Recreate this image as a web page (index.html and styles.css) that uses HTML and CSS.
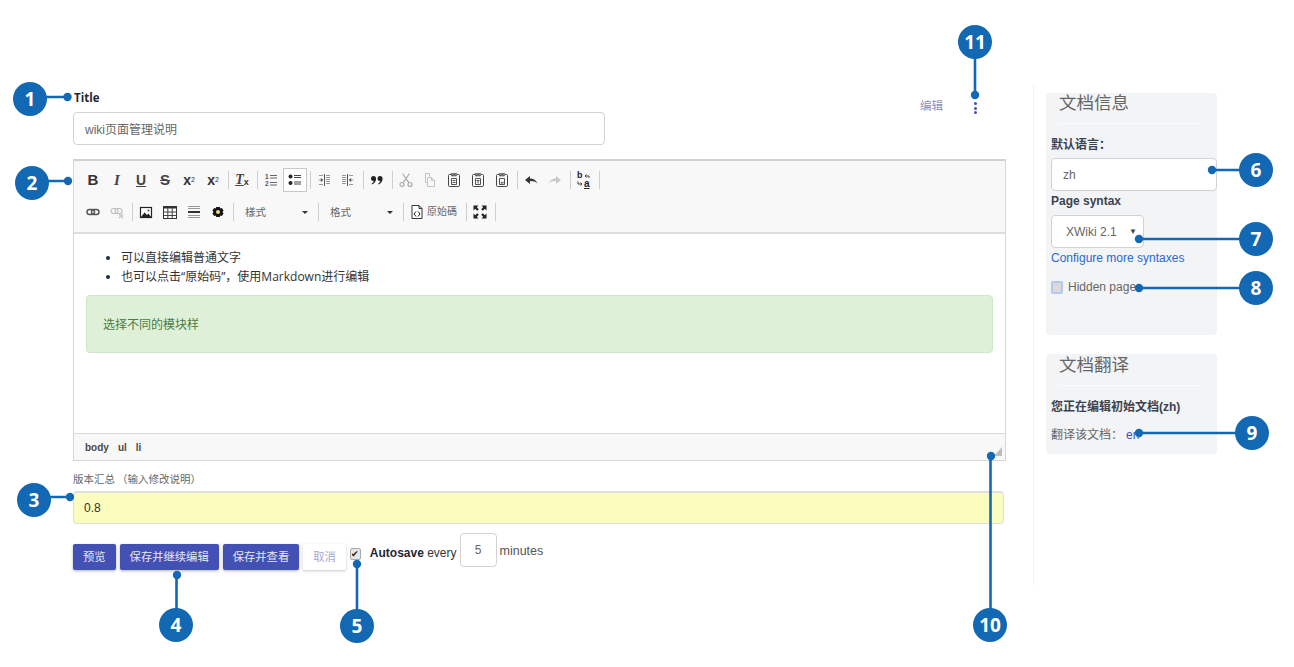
FILE: index.html
```html
<!DOCTYPE html>
<html lang="zh">
<head>
<meta charset="utf-8">
<title>编辑</title>
<link rel="stylesheet" href="styles.css">
</head>
<body>
<div class="page">
  <main class="main">
    <div class="head">
      <div class="title-field">
        <label class="title-label">Title</label>
        <div class="input title-input">wiki页面管理说明</div>
      </div>
      <div class="actions">
        <span class="edit-link">编辑</span>
        <span class="dots"><i></i><i></i><i></i></span>
      </div>
    </div>

    <section class="editor">
      <div class="toolbar">
        <div class="row">
          <span class="btn t-b">B</span>
          <span class="btn t-i">I</span>
          <span class="btn t-u">U</span>
          <span class="btn t-s">S</span>
          <span class="btn t-x">x<sub>2</sub></span>
          <span class="btn t-x">x<sup>2</sup></span>
          <span class="sep"></span>
          <span class="btn t-clear"><span>T</span><em>x</em></span>
          <span class="sep"></span>
          <span class="btn"><svg width="16" height="16" viewBox="0 0 16 16"><text x="2" y="7" class="mini">1</text><text x="2" y="14" class="mini">2</text><path d="M7 3.500h7M7 6h7M7 10.500h7M7 13h7" stroke="#666" fill="none"/></svg></span>
          <span class="btn active"><svg width="16" height="16" viewBox="0 0 16 16"><circle cx="3.500" cy="4.500" r="2" fill="#222"/><circle cx="3.500" cy="11" r="2" fill="#222"/><path d="M7 3.500h7M7 5.500h7M7 10h7M7 12h7" stroke="#444" fill="none"/></svg></span>
          <span class="sep"></span>
          <span class="btn"><svg width="16" height="16" viewBox="0 0 16 16"><path d="M8.500 2v12" stroke="#555" fill="none"/><path d="M10 3.500h4M10 5.500h4M10 7.500h4M10 9.500h4M10 11.500h4M3 3.500h4M3 12.500h4" stroke="#999" fill="none"/><path d="M2.500 8h2.500M7 8 5 6.500v3z" fill="#555" stroke="#555" stroke-width=".5"/></svg></span>
          <span class="btn"><svg width="16" height="16" viewBox="0 0 16 16"><path d="M7.500 2v12" stroke="#555" fill="none"/><path d="M2 3.500h4M2 5.500h4M2 7.500h4M2 9.500h4M2 11.500h4M9 3.500h4M9 12.500h4" stroke="#999" fill="none"/><path d="M13.500 8H11M9 8l2-1.500v3z" fill="#555" stroke="#555" stroke-width=".5"/></svg></span>
          <span class="sep"></span>
          <span class="btn"><svg width="16" height="16" viewBox="0 0 16 16"><circle cx="4.500" cy="6.500" r="2.500" fill="#222"/><circle cx="11" cy="6.500" r="2.500" fill="#222"/><path d="M7 6.500C7 9.500 5.500 11.500 3 12.500l-.4-.8C4 10.800 4.600 9.800 4.800 8.500zM13.500 6.500c0 3-1.500 5-4 6l-.4-.8c1.400-.9 2-1.900 2.200-3.200z" fill="#222"/></svg></span>
          <span class="sep"></span>
          <span class="btn"><svg width="16" height="16" viewBox="0 0 16 16"><g fill="none" stroke="#aaa" stroke-width="1.200"><circle cx="4" cy="12.500" r="2"/><circle cx="12" cy="12.500" r="2"/><path d="M5 10.800 11.500 1.500M11 10.800 4.500 1.500"/></g></svg></span>
          <span class="btn"><svg width="16" height="16" viewBox="0 0 16 16"><path d="M3.500 1.500h4l0 3M3.500 1.500v9h2M5.500 5.500h4l3 3v6h-7zM9.500 5.500v3h3" fill="none" stroke="#c4c4c4"/></svg></span>
          <span class="btn"><svg width="16" height="16" viewBox="0 0 16 16"><path d="M5 2.500H3.500c-.6 0-1 .4-1 1v10c0 .6.4 1 1 1h9c.6 0 1-.4 1-1v-10c0-.6-.4-1-1-1H11" fill="none" stroke="#444"/><rect x="5.500" y="1.500" width="5" height="2.500" fill="#777" stroke="#444" stroke-width=".5"/><path d="M5.500 6.500h5v6h-5zM6.500 8.500h3M6.500 10.500h3" fill="none" stroke="#555"/></svg></span>
          <span class="btn"><svg width="16" height="16" viewBox="0 0 16 16"><path d="M5 2.500H3.500c-.6 0-1 .4-1 1v10c0 .6.4 1 1 1h9c.6 0 1-.4 1-1v-10c0-.6-.4-1-1-1H11" fill="none" stroke="#444"/><rect x="5.500" y="1.500" width="5" height="2.500" fill="#777" stroke="#444" stroke-width=".5"/><path d="M5.500 6.500h5v6h-5zM6.500 8.500h3M8 8.500v3" fill="none" stroke="#555"/></svg></span>
          <span class="btn"><svg width="16" height="16" viewBox="0 0 16 16"><path d="M5 2.500H3.500c-.6 0-1 .4-1 1v10c0 .6.4 1 1 1h9c.6 0 1-.4 1-1v-10c0-.6-.4-1-1-1H11" fill="none" stroke="#444"/><rect x="5.500" y="1.500" width="5" height="2.500" fill="#777" stroke="#444" stroke-width=".5"/><path d="M5.500 6.500h5v6h-5z" fill="none" stroke="#555"/><path d="M6.500 11.500l1-2 1 1 1-1v2z" fill="#555"/></svg></span>
          <span class="sep"></span>
          <span class="btn"><svg width="16" height="16" viewBox="0 0 16 16"><path d="M2 8 7 4v2.500c3.500 0 6 1.500 7.500 5-2-2-4-2.600-7.500-2.500V12z" fill="#333"/></svg></span>
          <span class="btn"><svg width="16" height="16" viewBox="0 0 16 16"><path d="M14 8 9 4v2.500c-3.500 0-6 1.500-7.500 5 2-2 4-2.600 7.500-2.500V12z" fill="#c8c8c8"/></svg></span>
          <span class="sep"></span>
          <span class="btn t-replace"><span class="rp-b">b</span><span class="rp-a">a</span><svg class="rp-arrows" width="16" height="16" viewBox="0 0 16 16"><path d="M9 4h4v2M10.500 2.500 9 4l1.500 1.500M2 9.500V12h3.500M4.500 10.500 6 12l-1.500 1.500" fill="none" stroke="#444"/></svg></span>
          <span class="sep"></span>
        </div>
        <div class="row">
          <span class="btn"><svg width="16" height="16" viewBox="0 0 16 16"><g fill="none" stroke="#555" stroke-width="1.400"><rect x="2" y="5.500" width="7.500" height="5" rx="2.500"/><rect x="6.500" y="5.500" width="7.500" height="5" rx="2.500"/></g></svg></span>
          <span class="btn"><svg width="16" height="16" viewBox="0 0 16 16"><g fill="none" stroke="#c2c2c2" stroke-width="1.200"><rect x="2" y="4.500" width="7" height="5" rx="2.500"/><rect x="6" y="4.500" width="7" height="5" rx="2.500"/><path d="M10 10l4 4M14 10l-4 4"/></g></svg></span>
          <span class="sep"></span>
          <span class="btn"><svg width="16" height="16" viewBox="0 0 16 16"><rect x="2.500" y="3.500" width="11" height="10" fill="#fff" stroke="#222" stroke-width="1.200"/><path d="M3 13 6.500 8.500 9 11l1.500-1.500L13 13z" fill="#222"/><circle cx="10.500" cy="6.500" r="1.100" fill="#555"/></svg></span>
          <span class="btn"><svg width="16" height="16" viewBox="0 0 16 16"><rect x="1.500" y="2.500" width="13" height="12" fill="#fff" stroke="#333"/><path d="M1.500 2.500h13v2h-13z" fill="#333"/><path d="M1.500 8h13M1.500 11.500h13M5.800 4v10M10.200 4v10" stroke="#444" fill="none"/></svg></span>
          <span class="btn"><svg width="16" height="16" viewBox="0 0 16 16"><path d="M2 2.500h12M2 4.500h12M2 11.500h12M2 13.500h12" stroke="#999" fill="none"/><path d="M2 7h12v2H2z" fill="#333"/></svg></span>
          <span class="btn"><svg width="16" height="16" viewBox="0 0 16 16"><path d="M6.300 3h3.400l.6 1.600 1.600-.6 1.700 2.800-1.300 1.100v.2l1.300 1.100-1.700 2.800-1.600-.6-.6 1.600H6.300l-.6-1.600-1.600.6-1.700-2.800 1.300-1.100v-.2L2.400 6.800 4.100 4l1.600.6z" fill="#111"/><circle cx="8" cy="8.100" r="2" fill="#f3d98a"/></svg></span>
          <span class="sep"></span>
          <span class="combo"><span>樣式</span><i class="caret"></i></span>
          <span class="sep"></span>
          <span class="combo"><span>格式</span><i class="caret"></i></span>
          <span class="sep"></span>
          <span class="btn-text"><svg width="16" height="16" viewBox="0 0 16 16"><path d="M3 1.500h7l3 3v10H3zM10 1.500v3h3" fill="#fff" stroke="#333"/><path d="M7 7.500 5 10l2 2.500M9 7.500l2 2.500-2 2.500" fill="none" stroke="#222"/></svg><span>原始碼</span></span>
          <span class="sep"></span>
          <span class="btn"><svg width="16" height="16" viewBox="0 0 16 16"><path d="M1.500 1.500h5l-1.700 1.700 2 2-1.600 1.600-2-2L1.500 6.500zM14.500 1.500v5l-1.700-1.700-2 2-1.600-1.600 2-2L9.500 1.500zM1.500 14.500v-5l1.700 1.700 2-2 1.600 1.600-2 2 1.700 1.700zM14.500 14.500h-5l1.700-1.700-2-2 1.600-1.600 2 2 1.700-1.700z" fill="#222"/></svg></span>
          <span class="sep"></span>
        </div>
      </div>
      <div class="content">
        <ul class="list">
          <li>可以直接编辑普通文字</li>
          <li>也可以点击“原始码”，使用Markdown进行编辑</li>
        </ul>
        <div class="alert">选择不同的模块样</div>
      </div>
      <div class="statusbar">
        <span>body</span><span>ul</span><span>li</span>
        <i class="resizer"></i>
      </div>
    </section>

    <div class="summary-label">版本汇总<span class="hint">（输入修改说明）</span></div>
    <div class="input summary-input">0.8</div>

    <div class="bottom">
      <span class="button primary">预览</span>
      <span class="button primary">保存并继续编辑</span>
      <span class="button primary">保存并查看</span>
      <span class="button plain">取消</span>
      <span class="check checked">✔</span>
      <span class="autosave"><b>Autosave</b> every</span>
      <span class="input minutes">5</span>
      <span class="minutes-label">minutes</span>
    </div>
  </main>

  <div class="divider"></div>

  <aside class="side">
    <section class="panel panel-info">
      <h2 class="panel-title">文档信息</h2>
      <div class="side-label first">默认语言：</div>
      <div class="input lang">zh</div>
      <div class="side-label syntax">Page syntax</div>
      <div class="input select">XWiki 2.1<i class="select-arrow">▼</i></div>
      <a class="more">Configure more syntaxes</a>
      <div class="hidden-row"><span class="check hidden-check"></span><span>Hidden page</span></div>
    </section>
    <section class="panel panel-trans">
      <h2 class="panel-title">文档翻译</h2>
      <div class="side-label first">您正在编辑初始文档(zh)</div>
      <div class="trans-row">翻译该文档：<a class="trans-link">en</a></div>
    </section>
  </aside>
</div>

<svg class="callouts" width="1294" height="667" viewBox="0 0 1294 667">
  <g class="lines">
    <path d="M30 97H67"/><path d="M32 181H68"/><path d="M34 497H70"/>
    <path d="M176.500 625V575"/><path d="M357 626V564"/>
    <path d="M1256 170H1212"/><path d="M1256 239H1139"/><path d="M1256 288H1139"/><path d="M1252 433H1139"/>
    <path d="M990.500 625V456"/><path d="M975 42V95"/>
  </g>
  <g class="dots-c">
    <circle cx="67.500" cy="97" r="4.200"/><circle cx="68" cy="181" r="4.200"/><circle cx="70" cy="497" r="4.200"/>
    <circle cx="177" cy="575" r="4.200"/><circle cx="357" cy="564" r="4.200"/>
    <circle cx="1212" cy="170" r="4.200"/><circle cx="1139" cy="239" r="4.200"/><circle cx="1139" cy="288" r="4.200"/><circle cx="1139" cy="433" r="4.200"/>
    <circle cx="991" cy="456" r="4.200"/><circle cx="975" cy="95" r="4.200"/>
  </g>
  <g class="discs">
    <circle cx="30" cy="99" r="17"/><circle cx="32" cy="183" r="17"/><circle cx="34" cy="500" r="17"/>
    <circle cx="176" cy="625" r="17"/><circle cx="357" cy="626" r="17"/>
    <circle cx="1256" cy="170" r="17"/><circle cx="1256" cy="239" r="17"/><circle cx="1256" cy="288" r="17"/><circle cx="1252" cy="433" r="17"/>
    <circle cx="990" cy="625" r="17"/><circle cx="975" cy="42" r="17"/>
  </g>
  <g class="nums">
    <text x="30" y="105.500">1</text><text x="32" y="189.500">2</text><text x="34" y="506.500">3</text>
    <text x="176" y="631.500">4</text><text x="357" y="632.500">5</text>
    <text x="1256" y="176.500">6</text><text x="1256" y="245.500">7</text><text x="1256" y="294.500">8</text><text x="1252" y="439.500">9</text>
    <text x="990" y="631.500">10</text><text x="975" y="48.500">11</text>
  </g>
</svg>
</body>
</html>
```
FILE: styles.css
```css
* { box-sizing: border-box; }
html, body { margin: 0; padding: 0; }
body {
  width: 1294px;
  height: 667px;
  overflow: hidden;
  position: relative;
  background: #fff;
  color: #333;
  font: 12px/14px "Liberation Sans", "Noto Sans CJK SC", sans-serif;
}
.page { display: flex; align-items: flex-start; padding: 85px 0 0 73px; }
.main { width: 933px; padding-top: 6px; flex: none; }

.head { display: flex; align-items: flex-start; }
.title-field { width: 532px; }
.title-label { display: block; padding-left: 1px; font: 700 11.500px/14px "Open Sans", "Liberation Sans", sans-serif; color: #1f2733; }
.input {
  display: flex;
  align-items: center;
  height: 33px;
  background: #fff;
  border: 1px solid #d2d2d2;
  border-radius: 4px;
  color: #666;
}
.title-input { margin-top: 7px; padding: 2px 0 0 11px; }
.actions { margin-left: auto; margin-top: 7px; padding-right: 28px; display: flex; align-items: center; height: 14px; gap: 32px; }
.edit-link { font-size: 11.500px; line-height: 16px; padding-top: 2px; color: #8a8fbc; }
.dots { display: flex; flex-direction: column; gap: 1.500px; margin-left: -1px; margin-right: 1px; padding-top: 6px; }
.dots i { display: block; width: 3px; height: 3px; border-radius: 50%; background: #4450b0; }

.editor { margin-top: 14px; height: 302px; border: 1px solid #d6d6d6; border-top: 2px solid #d1d1d1; display: flex; flex-direction: column; }
.toolbar { height: 73px; padding: 7px 0 0 7px; background: #f8f8f8; border-bottom: 2px solid #dcdcdc; flex: none; }
.row { display: flex; align-items: center; height: 24px; margin-bottom: 8px; }
.btn { width: 24px; height: 24px; display: flex; align-items: center; justify-content: center; flex: none; color: #333; }
.btn.active { background: #fff; border: 1px solid #c8c8c8; }
.sep { width: 1px; height: 18px; margin: 0 1px 0 3px; background: #cfcfcf; flex: none; }
.t-b { font: 700 15px/16px "Liberation Sans", sans-serif; }
.t-i { font: italic 700 15px/16px "Liberation Serif", serif; color: #444; }
.t-u { font: 700 14px/16px "Liberation Sans", sans-serif; text-decoration: underline; color: #444; }
.t-s { font: 700 15px/16px "Liberation Sans", sans-serif; text-decoration: line-through; color: #444; }
.t-x { font: 700 14px/16px "Liberation Sans", sans-serif; }
.t-x sub, .t-x sup { font-size: 7px; line-height: 0; font-weight: 400; }
.t-clear span { font: italic 700 14px/16px "Liberation Serif", serif; text-decoration: underline; color: #444; }
.t-clear em { font: 700 9px/9px "Liberation Sans", sans-serif; align-self: flex-end; margin-bottom: 5px; }
.mini { font: 700 6.500px "Liberation Sans", sans-serif; fill: #555; }
.t-replace { position: relative; }
.rp-b { position: absolute; left: 5px; top: 3px; font: 700 9px/9px "Liberation Sans", sans-serif; color: #222; }
.rp-a { position: absolute; left: 12px; top: 11px; font: 700 10px/9px "Liberation Sans", sans-serif; color: #222; text-decoration: underline; }
.rp-arrows { position: absolute; left: 4px; top: 4px; }
.combo { width: 80px; height: 24px; padding: 0 7px 0 10px; display: flex; align-items: center; justify-content: space-between; font-size: 10.500px; color: #666; flex: none; }
.caret { width: 0; height: 0; border: 3px solid transparent; border-top-color: #333; border-bottom: 0; }
.btn-text { display: flex; align-items: center; height: 24px; padding: 0 5px 0 4px; gap: 2px; font-size: 10px; color: #666; flex: none; }
.btn-text span { width: 31px; }

.content { flex: 1; background: #fff; padding: 14px 12px 0; }
.list { margin: 0 0 9px; padding: 0 0 0 35px; font-family: "Open Sans", "Noto Sans CJK SC", sans-serif; font-size: 12px; line-height: 19px; color: #333; }
.list li::marker { color: #1d2a4a; }
.alert { height: 58px; padding: 2px 0 0 16px; display: flex; align-items: center; background: #dff0d8; border: 1px solid #d0e6c6; border-radius: 4px; color: #4b7a45; }
.statusbar { position: relative; flex: none; height: 27px; padding: 1px 0 0 11px; background: #f8f8f8; border-top: 1px solid #dcdcdc; display: flex; align-items: center; gap: 9px; font-size: 10px; font-weight: 700; color: #484848; }
.resizer { position: absolute; right: 3px; bottom: 4px; width: 0; height: 0; border-style: solid; border-width: 0 0 9px 8px; border-color: transparent transparent #bcbcbc transparent; }

.summary-label { margin-top: 11px; font-size: 10.500px; line-height: 14px; color: #666; }
.hint { margin-left: 2px; }
.summary-input { margin-top: 5px; width: 931px; padding-left: 10px; background: #fbfdbe; border-color: #dedede; border-top-width: 2px; color: #333; }
.bottom { margin-top: 9px; display: flex; align-items: flex-start; }
.button { margin-top: 11px; height: 26px; display: flex; align-items: center; justify-content: center; padding: 0 10px; border-radius: 2px; margin-right: 4px; font-size: 11.300px; box-shadow: 0 1px 3px rgba(0,0,0,.3); }
.primary { background: #4351b4; color: #e8e6f5; }
.plain { background: #fff; color: #a9a6cf; box-shadow: 0 1px 3px rgba(0,0,0,.22); }
.check { width: 11px; height: 11px; flex: none; border: 1px solid #aaa; border-radius: 2px; background: #e6e6e6; display: flex; align-items: center; justify-content: center; font-size: 9px; line-height: 9px; color: #222; }
.checked { margin-top: 15px; height: 12px; }
.autosave { margin-top: 13px; margin-left: 9px; color: #333; }
.autosave b { color: #1f2733; }
.minutes { margin-left: 3px; width: 37px; height: 34px; justify-content: center; font-size: 12px; }
.minutes-label { margin-left: 3px; margin-top: 11px; font-size: 12.500px; color: #555; }

.divider { width: 1px; height: 500px; margin-left: 27px; background: #f3f3f3; flex: none; }
.side { width: 171px; margin-left: 12px; padding-top: 8px; flex: none; }
.panel { background: #f3f4f6; border-radius: 4px; padding-left: 5px; }
.panel-info { height: 242px; }
.panel-trans { height: 100px; margin-top: 19px; padding-top: 1px; }
.panel-title { margin: 0 14px 0 8px; padding: 0 0 10px 0; font-size: 17.500px; line-height: 20px; font-weight: 400; color: #666; border-bottom: 1px solid #fbfbfc; }
.side-label { font-weight: 700; color: #3c4350; }
.side-label.first { margin-top: 14px; margin-bottom: -1px; }
.side-label.syntax { margin-top: 3px; }
.lang { margin-top: 7px; width: 166px; padding-left: 11px; }
.select { margin-top: 7px; width: 93px; padding-left: 14px; position: relative; color: #666; }
.select-arrow { position: absolute; right: 6px; top: 11px; font-size: 8px; line-height: 10px; font-style: normal; color: #444; }
.more { display: block; margin-top: 3px; color: #2a6ac9; }
.hidden-row { margin-top: 15px; display: flex; align-items: center; gap: 5px; height: 14px; color: #666; }
.hidden-check { width: 12px; height: 13px; background: #dadada; border: 2px solid #b3c8ec; }
.trans-row { margin-top: 15px; color: #666; }
.trans-link { color: #3e50c0; margin-left: 3px; }

.callouts { position: absolute; left: 0; top: 0; pointer-events: none; }
.lines path { stroke: #1268b3; stroke-width: 2.600; fill: none; }
.dots-c circle, .discs circle { fill: #1268b3; }
.nums text { fill: #fff; font: 700 19px "Open Sans", "Liberation Sans", sans-serif; text-anchor: middle; }
```
